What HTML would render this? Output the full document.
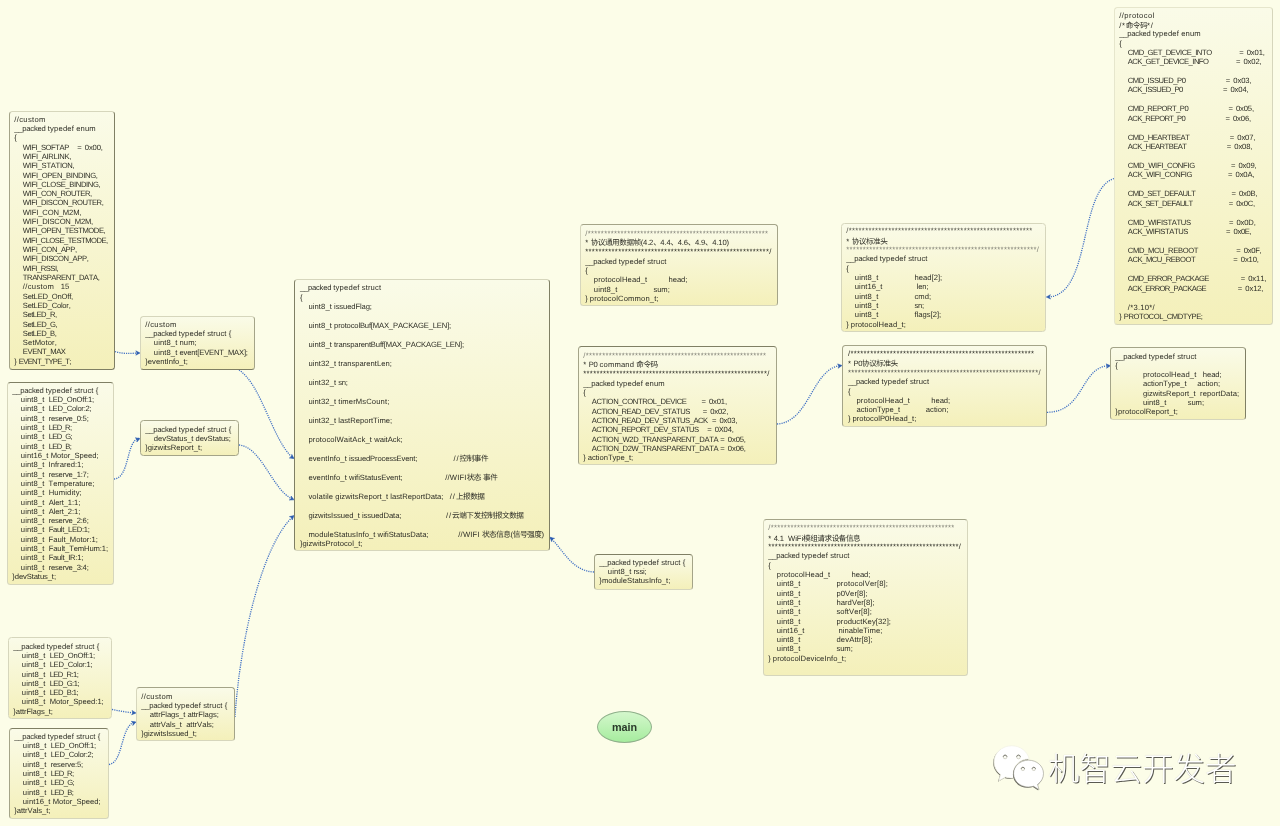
<!DOCTYPE html>
<html lang="zh">
<head>
<meta charset="utf-8">
<title>main</title>
<style>
html,body{margin:0;padding:0;}
body{width:1280px;height:826px;background:#fcfde8;position:relative;overflow:hidden;
 font-family:"Liberation Sans","Noto Sans CJK SC",sans-serif;}
.n{position:absolute;box-sizing:border-box;border:1px solid #a4a488;
 border-radius:3.5px;background:linear-gradient(180deg,#fafbe8 0%,#f4f0ba 100%);
 font-family:"Liberation Sans","Noto Sans CJK SC",sans-serif;font-size:7.65px;line-height:9.32px;color:#2e2e26;white-space:pre;overflow:hidden;margin:0;
 font-kerning:none;text-rendering:geometricPrecision;will-change:transform;}
.n i{font-style:normal;}
.n .e{display:inline-block;height:9.68px;vertical-align:top;}
.n .z{font-weight:400;}
.n .k{position:relative;top:1px;}
.n .tl{color:#85857a;}
.n .tm{color:#55554c;}
svg{position:absolute;left:0;top:0;}
.c{fill:none;stroke:#3d6ec4;stroke-width:1.3;stroke-dasharray:1.15 1.1;}
.a{fill:#2c5cb0;stroke:#2c5cb0;stroke-width:0.5;stroke-linejoin:round;}
#main{position:absolute;left:597px;top:711px;width:55px;height:32px;border-radius:50%;box-sizing:border-box;
 border:1px solid #8fb08a;background:linear-gradient(180deg,#d4f7cc 0%,#a6ec9e 100%);
 font-weight:bold;font-size:10.8px;line-height:30px;text-align:center;color:#2a3a2a;will-change:transform;}
#wm{position:absolute;left:1048px;top:747.5px;font-size:31.4px;line-height:38px;color:#fff;letter-spacing:0;
 text-shadow:1px 1px 0.6px #5a5a52, 0 0 1px #c8c8b8;white-space:nowrap;font-family:"Noto Sans CJK SC","Liberation Sans",sans-serif;font-weight:300;will-change:transform;}
</style>
</head>
<body>
<svg width="1280" height="826" viewBox="0 0 1280 826">
<path class="c" d="M115,351.5 C122,354 130,353.5 139,353"/>
<path class="a" transform="translate(140,353) rotate(0)" d="M0,0 L-4.2,-2.2 L-3,0 L-4.2,2.2 Z"/>
<path class="c" d="M239,370 C262,385 272,440 293,458"/>
<path class="a" transform="translate(294,458.6) rotate(35)" d="M0,0 L-4.2,-2.2 L-3,0 L-4.2,2.2 Z"/>
<path class="c" d="M114,479 C130,478 126,440 139,438.5"/>
<path class="a" transform="translate(140,438.5) rotate(-20)" d="M0,0 L-4.2,-2.2 L-3,0 L-4.2,2.2 Z"/>
<path class="c" d="M239,445 C262,447 272,490 293,499.5"/>
<path class="a" transform="translate(294,499.8) rotate(25)" d="M0,0 L-4.2,-2.2 L-3,0 L-4.2,2.2 Z"/>
<path class="c" d="M235,717 C240,640 262,545 293,516.5"/>
<path class="a" transform="translate(294,515.6) rotate(-40)" d="M0,0 L-4.2,-2.2 L-3,0 L-4.2,2.2 Z"/>
<path class="c" d="M112,709.5 C120,711 128,712.5 135,713"/>
<path class="a" transform="translate(136,713) rotate(5)" d="M0,0 L-4.2,-2.2 L-3,0 L-4.2,2.2 Z"/>
<path class="c" d="M109,764.5 C124,762 120,726 135,722"/>
<path class="a" transform="translate(136,722) rotate(-20)" d="M0,0 L-4.2,-2.2 L-3,0 L-4.2,2.2 Z"/>
<path class="c" d="M594,572 C572,571 564,551 550.5,537.8"/>
<path class="a" transform="translate(550,537.2) rotate(222)" d="M0,0 L-4.2,-2.2 L-3,0 L-4.2,2.2 Z"/>
<path class="c" d="M777,424 C810,422 812,368 841,365.5"/>
<path class="a" transform="translate(842,365.5) rotate(-8)" d="M0,0 L-4.2,-2.2 L-3,0 L-4.2,2.2 Z"/>
<path class="c" d="M1047,412.3 C1085,412 1080,367 1109,365.7"/>
<path class="a" transform="translate(1110.5,365.7) rotate(-5)" d="M0,0 L-4.2,-2.2 L-3,0 L-4.2,2.2 Z"/>
<path class="c" d="M1114,178.5 C1078,190 1092,296 1047.5,297"/>
<path class="a" transform="translate(1046.3,297) rotate(178)" d="M0,0 L-4.2,-2.2 L-3,0 L-4.2,2.2 Z"/>
</svg>
<pre class="n" id="bA" style="left:9px;top:111px;width:106px;height:259px;padding:2.65px 0 0 4.3px;border-color:#d6d6bc #7f7f64 #7f7f64 #a4a488;"><i style="letter-spacing:0.33px">//custom</i>
<i style="letter-spacing:-0.23px">__packed</i> <i style="letter-spacing:0.18px">typedef</i> <i style="letter-spacing:0.15px">enum</i>
<i style="letter-spacing:-0.19px">{</i>
    <i style="letter-spacing:-0.45px">WIFI_SOFTAP</i>    <i style="letter-spacing:0.90px">=</i> <i style="letter-spacing:-0.14px">0x00,</i>
    <i style="letter-spacing:-0.30px">WIFI_AIRLINK,</i>
    <i style="letter-spacing:-0.31px">WIFI_STATION,</i>
    <i style="letter-spacing:-0.30px">WIFI_OPEN_BINDING,</i>
    <i style="letter-spacing:-0.37px">WIFI_CLOSE_BINDING,</i>
    <i style="letter-spacing:-0.44px">WIFI_CON_ROUTER,</i>
    <i style="letter-spacing:-0.43px">WIFI_DISCON_ROUTER,</i>
    <i style="letter-spacing:-0.17px">WIFI_CON_M2M,</i>
    <i style="letter-spacing:-0.20px">WIFI_DISCON_M2M,</i>
    <i style="letter-spacing:-0.44px">WIFI_OPEN_TESTMODE,</i>
    <i style="letter-spacing:-0.51px">WIFI_CLOSE_TESTMODE,</i>
    <i style="letter-spacing:-0.39px">WIFI_CON_APP,</i>
    <i style="letter-spacing:-0.38px">WIFI_DISCON_APP,</i>
    <i style="letter-spacing:-0.50px">WIFI_RSSI,</i>
    <i style="letter-spacing:-0.41px">TRANSPARENT_DATA,</i>
    <i style="letter-spacing:0.33px">//custom</i>   <i style="letter-spacing:-0.02px">15</i>
    <i style="letter-spacing:-0.22px">SetLED_OnOff,</i>
    <i style="letter-spacing:-0.25px">SetLED_Color,</i>
    <i style="letter-spacing:-0.50px">SetLED_R,</i>
    <i style="letter-spacing:-0.47px">SetLED_G,</i>
    <i style="letter-spacing:-0.48px">SetLED_B,</i>
    <i style="letter-spacing:0.12px">SetMotor,</i>
    <i style="letter-spacing:-0.39px">EVENT_MAX</i>
<i style="letter-spacing:-0.19px">}</i> <i style="letter-spacing:-0.68px">EVENT_TYPE_T;</i></pre>
<pre class="n" id="bB" style="left:140px;top:316px;width:115px;height:54px;padding:2.80px 0 0 4.3px;border-color:#d6d6bc #a4a488 #7f7f64 #d6d6bc;"><i style="letter-spacing:0.33px">//custom</i>
<i style="letter-spacing:-0.23px">__packed</i> <i style="letter-spacing:0.18px">typedef</i> <i style="letter-spacing:0.12px">struct</i> <i style="letter-spacing:-0.19px">{</i>
    <i style="letter-spacing:0.09px">uint8_t</i> <i style="letter-spacing:0.08px">num;</i>
    <i style="letter-spacing:0.09px">uint8_t</i> <i style="letter-spacing:-0.18px">event[EVENT_MAX];</i>
}eventInfo_t;</pre>
<pre class="n" id="bC" style="left:7px;top:382px;width:107px;height:203px;padding:2.80px 0 0 4.3px;border-color:#7f7f64 #d6d6bc #d6d6bc #d6d6bc;"><i style="letter-spacing:-0.23px">__packed</i> <i style="letter-spacing:0.18px">typedef</i> <i style="letter-spacing:0.12px">struct</i> <i style="letter-spacing:-0.19px">{</i>
    <i style="letter-spacing:0.09px">uint8_t</i>  <i style="letter-spacing:-0.23px">LED_OnOff:1;</i>
    <i style="letter-spacing:0.09px">uint8_t</i>  <i style="letter-spacing:-0.26px">LED_Color:2;</i>
    <i style="letter-spacing:0.09px">uint8_t</i>  <i style="letter-spacing:-0.21px">reserve_0:5;</i>
    <i style="letter-spacing:0.09px">uint8_t</i>  <i style="letter-spacing:-0.66px">LED_R;</i>
    <i style="letter-spacing:0.09px">uint8_t</i>  <i style="letter-spacing:-0.62px">LED_G;</i>
    <i style="letter-spacing:0.09px">uint8_t</i>  <i style="letter-spacing:-0.62px">LED_B;</i>
    <i style="letter-spacing:0.07px">uint16_t</i> Motor_Speed;
    <i style="letter-spacing:0.09px">uint8_t</i>  Infrared:1;
    <i style="letter-spacing:0.09px">uint8_t</i>  <i style="letter-spacing:-0.21px">reserve_1:7;</i>
    <i style="letter-spacing:0.09px">uint8_t</i>  Temperature;
    <i style="letter-spacing:0.09px">uint8_t</i>  <i style="letter-spacing:0.16px">Humidity;</i>
    <i style="letter-spacing:0.09px">uint8_t</i>  <i style="letter-spacing:-0.12px">Alert_1:1;</i>
    <i style="letter-spacing:0.09px">uint8_t</i>  <i style="letter-spacing:-0.12px">Alert_2:1;</i>
    <i style="letter-spacing:0.09px">uint8_t</i>  <i style="letter-spacing:-0.21px">reserve_2:6;</i>
    <i style="letter-spacing:0.09px">uint8_t</i>  <i style="letter-spacing:-0.31px">Fault_LED:1;</i>
    <i style="letter-spacing:0.09px">uint8_t</i>  Fault_Motor:1;
    <i style="letter-spacing:0.09px">uint8_t</i>  <i style="letter-spacing:-0.12px">Fault_TemHum:1;</i>
    <i style="letter-spacing:0.09px">uint8_t</i>  <i style="letter-spacing:-0.27px">Fault_IR:1;</i>
    <i style="letter-spacing:0.09px">uint8_t</i>  <i style="letter-spacing:-0.21px">reserve_3:4;</i>
<i style="letter-spacing:-0.11px">}devStatus_t;</i></pre>
<pre class="n" id="bD" style="left:140px;top:420px;width:99px;height:36px;padding:3.50px 0 0 4.3px;border-color:#a4a488 #a4a488 #a4a488 #a4a488;"><i style="letter-spacing:-0.23px">__packed</i> <i style="letter-spacing:0.18px">typedef</i> <i style="letter-spacing:0.12px">struct</i> <i style="letter-spacing:-0.19px">{</i>
    <i style="letter-spacing:-0.07px">devStatus_t</i> <i style="letter-spacing:-0.07px">devStatus;</i>
}gizwitsReport_t;</pre>
<pre class="n" id="bE" style="left:8px;top:637px;width:104px;height:82px;padding:3.60px 0 0 4.3px;border-color:#d6d6bc #d6d6bc #d6d6bc #d6d6bc;"><i style="letter-spacing:-0.23px">__packed</i> <i style="letter-spacing:0.18px">typedef</i> <i style="letter-spacing:0.12px">struct</i> <i style="letter-spacing:-0.19px">{</i>
    <i style="letter-spacing:0.09px">uint8_t</i>  <i style="letter-spacing:-0.23px">LED_OnOff:1;</i>
    <i style="letter-spacing:0.09px">uint8_t</i>  <i style="letter-spacing:-0.26px">LED_Color:1;</i>
    <i style="letter-spacing:0.09px">uint8_t</i>  <i style="letter-spacing:-0.55px">LED_R:1;</i>
    <i style="letter-spacing:0.09px">uint8_t</i>  <i style="letter-spacing:-0.52px">LED_G:1;</i>
    <i style="letter-spacing:0.09px">uint8_t</i>  <i style="letter-spacing:-0.52px">LED_B:1;</i>
    <i style="letter-spacing:0.09px">uint8_t</i>  <i style="letter-spacing:-0.02px">Motor_Speed:1;</i>
<i style="letter-spacing:-0.09px">}attrFlags_t;</i></pre>
<pre class="n" id="bF" style="left:9px;top:728px;width:100px;height:91px;padding:2.75px 0 0 4.3px;border-color:#7f7f64 #d6d6bc #d6d6bc #a4a488;"><i style="letter-spacing:-0.23px">__packed</i> <i style="letter-spacing:0.18px">typedef</i> <i style="letter-spacing:0.12px">struct</i> <i style="letter-spacing:-0.19px">{</i>
    <i style="letter-spacing:0.09px">uint8_t</i>  <i style="letter-spacing:-0.23px">LED_OnOff:1;</i>
    <i style="letter-spacing:0.09px">uint8_t</i>  <i style="letter-spacing:-0.26px">LED_Color:2;</i>
    <i style="letter-spacing:0.09px">uint8_t</i>  <i style="letter-spacing:-0.15px">reserve:5;</i>
    <i style="letter-spacing:0.09px">uint8_t</i>  <i style="letter-spacing:-0.66px">LED_R;</i>
    <i style="letter-spacing:0.09px">uint8_t</i>  <i style="letter-spacing:-0.62px">LED_G;</i>
    <i style="letter-spacing:0.09px">uint8_t</i>  <i style="letter-spacing:-0.62px">LED_B;</i>
    <i style="letter-spacing:0.07px">uint16_t</i> Motor_Speed;
<i style="letter-spacing:-0.07px">}attrVals_t;</i></pre>
<pre class="n" id="bG" style="left:136px;top:687px;width:99px;height:54px;padding:3.60px 0 0 4.3px;border-color:#a4a488 #a4a488 #d6d6bc #d6d6bc;"><i style="letter-spacing:0.33px">//custom</i>
<i style="letter-spacing:-0.23px">__packed</i> <i style="letter-spacing:0.18px">typedef</i> <i style="letter-spacing:0.12px">struct</i> <i style="letter-spacing:-0.19px">{</i>
    <i style="letter-spacing:-0.05px">attrFlags_t</i> <i style="letter-spacing:-0.05px">attrFlags;</i>
    <i style="letter-spacing:-0.02px">attrVals_t</i>  <i style="letter-spacing:-0.02px">attrVals;</i>
<i style="letter-spacing:-0.06px">}gizwitsIssued_t;</i></pre>
<pre class="n" id="bH" style="left:294px;top:279px;width:256px;height:272px;padding:3.20px 0 0 4.9px;border-color:#d6d6bc #7f7f64 #d6d6bc #7f7f64;"><i style="letter-spacing:-0.23px">__packed</i> <i style="letter-spacing:0.18px">typedef</i> <i style="letter-spacing:0.12px">struct</i>
<i style="letter-spacing:-0.19px">{</i>
    <i style="letter-spacing:0.09px">uint8_t</i> <i style="letter-spacing:-0.12px">issuedFlag;</i>
<i class="e"></i>
    <i style="letter-spacing:0.09px">uint8_t</i> <i style="letter-spacing:-0.17px">protocolBuf[MAX_PACKAGE_LEN];</i>
<i class="e"></i>
    <i style="letter-spacing:0.09px">uint8_t</i> <i style="letter-spacing:-0.17px">transparentBuff[MAX_PACKAGE_LEN];</i>
<i class="e"></i>
    <i style="letter-spacing:0.07px">uint32_t</i> transparentLen;
<i class="e"></i>
    <i style="letter-spacing:0.07px">uint32_t</i> <i style="letter-spacing:-0.25px">sn;</i>
<i class="e"></i>
    <i style="letter-spacing:0.07px">uint32_t</i> <i style="letter-spacing:0.11px">timerMsCount;</i>
<i class="e"></i>
    <i style="letter-spacing:0.07px">uint32_t</i> lastReportTime;
<i class="e"></i>
    <i style="letter-spacing:0.12px">protocolWaitAck_t</i> waitAck;
<i class="e"></i>
    <i style="letter-spacing:0.06px">eventInfo_t</i> <i style="letter-spacing:-0.16px">issuedProcessEvent;</i>                 <i style="letter-spacing:0.94px">//</i><i class="z" style="letter-spacing:-0.50px">控制事件</i>
<i class="e"></i>
    <i style="letter-spacing:0.06px">eventInfo_t</i> <i style="letter-spacing:-0.04px">wifiStatusEvent;</i>                    <i style="letter-spacing:0.18px">//WIFI</i><i class="z" style="letter-spacing:-0.50px">状态</i> <i class="z" style="letter-spacing:-0.50px">事件</i>
<i class="e"></i>
    <i style="letter-spacing:0.13px">volatile</i> <i style="letter-spacing:0.04px">gizwitsReport_t</i> lastReportData;   <i style="letter-spacing:0.94px">//</i><i class="z" style="letter-spacing:-0.50px">上报数据</i>
<i class="e"></i>
    <i style="letter-spacing:-0.03px">gizwitsIssued_t</i> <i style="letter-spacing:-0.08px">issuedData;</i>                     <i style="letter-spacing:0.94px">//</i><i class="z" style="letter-spacing:-0.50px">云端下发控制报文数据</i>
<i class="e"></i>
    <i style="letter-spacing:0.07px">moduleStatusInfo_t</i> wifiStatusData;              <i style="letter-spacing:0.18px">//WIFI</i> <i class="z" style="letter-spacing:-0.50px">状态信息</i><i style="letter-spacing:-0.18px">(</i><i class="z" style="letter-spacing:-0.50px">信号强度</i><i style="letter-spacing:-0.18px">)</i>
<i style="letter-spacing:0.03px">}gizwitsProtocol_t;</i></pre>
<pre class="n" id="bI" style="left:580px;top:224px;width:198px;height:82px;padding:3.80px 0 0 4.3px;border-color:#a4a488 #a4a488 #d6d6bc #d6d6bc;"><i class="tl"><i style="letter-spacing:0.31px">/*******************************************************</i></i>
<i style="letter-spacing:0.30px">*</i> <i class="z" style="letter-spacing:-0.50px">协议通用数据帧</i><i style="letter-spacing:-0.16px">(4.2</i><i class="z" style="letter-spacing:-0.50px">、</i><i style="letter-spacing:-0.16px">4.4</i><i class="z" style="letter-spacing:-0.50px">、</i><i style="letter-spacing:-0.16px">4.6</i><i class="z" style="letter-spacing:-0.50px">、</i><i style="letter-spacing:-0.16px">4.9</i><i class="z" style="letter-spacing:-0.50px">、</i><i style="letter-spacing:-0.13px">4.10)</i>
<i style="letter-spacing:0.31px">********************************************************/</i>
<i style="letter-spacing:-0.23px">__packed</i> <i style="letter-spacing:0.18px">typedef</i> <i style="letter-spacing:0.12px">struct</i>
<i style="letter-spacing:-0.19px">{</i>
    <i style="letter-spacing:0.12px">protocolHead_t</i>          <i style="letter-spacing:-0.06px">head;</i>
    <i style="letter-spacing:0.09px">uint8_t</i>                 <i style="letter-spacing:-0.09px">sum;</i>
<i style="letter-spacing:-0.19px">}</i> <i style="letter-spacing:0.13px">protocolCommon_t;</i></pre>
<pre class="n" id="bJ" style="left:578px;top:346px;width:199px;height:119px;padding:3.70px 0 0 4.3px;border-color:#7f7f64 #a4a488 #d6d6bc #a4a488;"><i class="tl"><i style="letter-spacing:0.31px">/*******************************************************</i></i>
<i style="letter-spacing:0.30px">*</i> <i style="letter-spacing:-0.36px">P0</i> <i style="letter-spacing:0.17px">command</i> <i class="z" style="letter-spacing:-0.50px">命令码</i>
<i style="letter-spacing:0.31px">********************************************************/</i>
<i style="letter-spacing:-0.23px">__packed</i> <i style="letter-spacing:0.18px">typedef</i> <i style="letter-spacing:0.15px">enum</i>
<i style="letter-spacing:-0.19px">{</i>
    <i style="letter-spacing:-0.40px">ACTION_CONTROL_DEVICE</i>       <i style="letter-spacing:0.90px">=</i> <i style="letter-spacing:-0.14px">0x01,</i>
    <i style="letter-spacing:-0.48px">ACTION_READ_DEV_STATUS</i>      <i style="letter-spacing:0.90px">=</i> <i style="letter-spacing:-0.14px">0x02,</i>
    <i style="letter-spacing:-0.49px">ACTION_READ_DEV_STATUS_ACK</i>  <i style="letter-spacing:0.90px">=</i> <i style="letter-spacing:-0.14px">0x03,</i>
    <i style="letter-spacing:-0.52px">ACTION_REPORT_DEV_STATUS</i>    <i style="letter-spacing:0.90px">=</i> <i style="letter-spacing:-0.19px">0X04,</i>
    <i style="letter-spacing:-0.35px">ACTION_W2D_TRANSPARENT_DATA</i> <i style="letter-spacing:0.90px">=</i> <i style="letter-spacing:-0.14px">0x05,</i>
    <i style="letter-spacing:-0.35px">ACTION_D2W_TRANSPARENT_DATA</i> <i style="letter-spacing:0.90px">=</i> <i style="letter-spacing:-0.14px">0x06,</i>
<i style="letter-spacing:-0.19px">}</i> <i style="letter-spacing:-0.04px">actionType_t;</i></pre>
<pre class="n" id="bK" style="left:594px;top:554px;width:99px;height:36px;padding:2.80px 0 0 4.3px;border-color:#7f7f64 #a4a488 #d6d6bc #a4a488;"><i style="letter-spacing:-0.23px">__packed</i> <i style="letter-spacing:0.18px">typedef</i> <i style="letter-spacing:0.12px">struct</i> <i style="letter-spacing:-0.19px">{</i>
    <i style="letter-spacing:0.09px">uint8_t</i> <i style="letter-spacing:-0.21px">rssi;</i>
<i style="letter-spacing:0.03px">}moduleStatusInfo_t;</i></pre>
<pre class="n" id="bL" style="left:763px;top:519px;width:205px;height:157px;padding:3.40px 0 0 4.3px;border-color:#a4a488 #d6d6bc #d6d6bc #d6d6bc;"><i class="tl"><i style="letter-spacing:0.31px">/********************************************************</i></i>
<i class="k"><i style="letter-spacing:0.30px">*</i> <i style="letter-spacing:-0.16px">4.1</i>  <i style="letter-spacing:-0.08px">WiFi</i><i class="z" style="letter-spacing:-0.50px">模组请求设备信息</i></i>
<i style="letter-spacing:0.31px">**********************************************************/</i>
<i style="letter-spacing:-0.23px">__packed</i> <i style="letter-spacing:0.18px">typedef</i> <i style="letter-spacing:0.12px">struct</i>
<i style="letter-spacing:-0.19px">{</i>
    <i style="letter-spacing:0.12px">protocolHead_t</i>          <i style="letter-spacing:-0.06px">head;</i>
    <i style="letter-spacing:0.09px">uint8_t</i>                 <i style="letter-spacing:0.13px">protocolVer[8];</i>
    <i style="letter-spacing:0.09px">uint8_t</i>                 <i style="letter-spacing:0.02px">p0Ver[8];</i>
    <i style="letter-spacing:0.09px">uint8_t</i>                 <i style="letter-spacing:0.03px">hardVer[8];</i>
    <i style="letter-spacing:0.09px">uint8_t</i>                 <i style="letter-spacing:0.05px">softVer[8];</i>
    <i style="letter-spacing:0.09px">uint8_t</i>                 <i style="letter-spacing:0.07px">productKey[32];</i>
    <i style="letter-spacing:0.07px">uint16_t</i>                ninableTime;
    <i style="letter-spacing:0.09px">uint8_t</i>                 <i style="letter-spacing:0.13px">devAttr[8];</i>
    <i style="letter-spacing:0.09px">uint8_t</i>                 <i style="letter-spacing:-0.09px">sum;</i>
<i style="letter-spacing:-0.19px">}</i> <i style="letter-spacing:0.08px">protocolDeviceInfo_t;</i>
<i class="e"></i></pre>
<pre class="n" id="bM" style="left:841px;top:223px;width:205px;height:109px;padding:2.40px 0 0 4.3px;border-color:#d6d6bc #d6d6bc #d6d6bc #d6d6bc;"><i class="tm"><i style="letter-spacing:0.31px">/********************************************************</i></i>
<i class="k"><i style="letter-spacing:0.30px">*</i> <i class="z" style="letter-spacing:-0.50px">协议标准头</i></i>
<i class="tl"><i style="letter-spacing:0.31px">**********************************************************/</i></i>
<i style="letter-spacing:-0.23px">__packed</i> <i style="letter-spacing:0.18px">typedef</i> <i style="letter-spacing:0.12px">struct</i>
<i style="letter-spacing:-0.19px">{</i>
    <i style="letter-spacing:0.09px">uint8_t</i>                 <i style="letter-spacing:0.02px">head[2];</i>
    <i style="letter-spacing:0.07px">uint16_t</i>                <i style="letter-spacing:-0.05px">len;</i>
    <i style="letter-spacing:0.09px">uint8_t</i>                 <i style="letter-spacing:0.03px">cmd;</i>
    <i style="letter-spacing:0.09px">uint8_t</i>                 <i style="letter-spacing:-0.25px">sn;</i>
    <i style="letter-spacing:0.09px">uint8_t</i>                 flags[2];
<i style="letter-spacing:-0.19px">}</i> <i style="letter-spacing:0.08px">protocolHead_t;</i></pre>
<pre class="n" id="bN" style="left:842px;top:345px;width:205px;height:82px;padding:3.30px 0 0 5.0px;border-color:#a4a488 #a4a488 #d6d6bc #a4a488;"><i style="letter-spacing:0.31px">/********************************************************</i>
<i style="letter-spacing:0.30px">*</i> <i style="letter-spacing:-0.36px">P0</i><i class="z" style="letter-spacing:-0.50px">协议标准头</i>
<i class="tm"><i style="letter-spacing:0.31px">**********************************************************/</i></i>
<i style="letter-spacing:-0.23px">__packed</i> <i style="letter-spacing:0.18px">typedef</i> <i style="letter-spacing:0.12px">struct</i>
<i style="letter-spacing:-0.19px">{</i>
    <i style="letter-spacing:0.12px">protocolHead_t</i>          <i style="letter-spacing:-0.06px">head;</i>
    actionType_t            <i style="letter-spacing:0.05px">action;</i>
<i style="letter-spacing:-0.19px">}</i> <i style="letter-spacing:0.03px">protocolP0Head_t;</i></pre>
<pre class="n" id="bO" style="left:1110px;top:347px;width:136px;height:73px;padding:3.50px 0 0 4.3px;border-color:#a4a488 #7f7f64 #d6d6bc #a4a488;"><i style="letter-spacing:-0.23px">__packed</i> <i style="letter-spacing:0.18px">typedef</i> <i style="letter-spacing:0.12px">struct</i>
<i style="letter-spacing:-0.19px">{</i>
             <i style="letter-spacing:0.12px">protocolHead_t</i>   <i style="letter-spacing:-0.06px">head;</i>
             actionType_t     <i style="letter-spacing:0.05px">action;</i>
             <i style="letter-spacing:0.04px">gizwitsReport_t</i>  <i style="letter-spacing:0.09px">reportData;</i>
             <i style="letter-spacing:0.09px">uint8_t</i>          <i style="letter-spacing:-0.09px">sum;</i>
<i style="letter-spacing:0.08px">}protocolReport_t;</i></pre>
<pre class="n" id="bP" style="left:1114px;top:7px;width:159px;height:318px;padding:2.60px 0 0 4.3px;border-color:#e6e6cc #d6d6bc #d6d6bc #e6e6cc;"><i style="letter-spacing:0.40px">//protocol</i>
<i class="k"><i style="letter-spacing:0.62px">/*</i><i class="z" style="letter-spacing:-0.50px">命令码</i><i style="letter-spacing:0.62px">*/</i></i>
<i style="letter-spacing:-0.23px">__packed</i> <i style="letter-spacing:0.18px">typedef</i> <i style="letter-spacing:0.15px">enum</i>
<i style="letter-spacing:-0.19px">{</i>
    <i style="letter-spacing:-0.46px">CMD_GET_DEVICE_INTO</i>             <i style="letter-spacing:0.90px">=</i> <i style="letter-spacing:-0.14px">0x01,</i>
    <i style="letter-spacing:-0.54px">ACK_GET_DEVICE_INFO</i>             <i style="letter-spacing:0.90px">=</i> <i style="letter-spacing:-0.14px">0x02,</i>
<i class="e"></i>
    <i style="letter-spacing:-0.46px">CMD_ISSUED_P0</i>                   <i style="letter-spacing:0.90px">=</i> <i style="letter-spacing:-0.14px">0x03,</i>
    <i style="letter-spacing:-0.55px">ACK_ISSUED_P0</i>                   <i style="letter-spacing:0.90px">=</i> <i style="letter-spacing:-0.14px">0x04,</i>
<i class="e"></i>
    <i style="letter-spacing:-0.52px">CMD_REPORT_P0</i>                   <i style="letter-spacing:0.90px">=</i> <i style="letter-spacing:-0.14px">0x05,</i>
    <i style="letter-spacing:-0.62px">ACK_REPORT_P0</i>                   <i style="letter-spacing:0.90px">=</i> <i style="letter-spacing:-0.14px">0x06,</i>
<i class="e"></i>
    <i style="letter-spacing:-0.45px">CMD_HEARTBEAT</i>                   <i style="letter-spacing:0.90px">=</i> <i style="letter-spacing:-0.14px">0x07,</i>
    <i style="letter-spacing:-0.55px">ACK_HEARTBEAT</i>                   <i style="letter-spacing:0.90px">=</i> <i style="letter-spacing:-0.14px">0x08,</i>
<i class="e"></i>
    <i style="letter-spacing:-0.31px">CMD_WIFI_CONFIG</i>                 <i style="letter-spacing:0.90px">=</i> <i style="letter-spacing:-0.14px">0x09,</i>
    <i style="letter-spacing:-0.39px">ACK_WIFI_CONFIG</i>                 <i style="letter-spacing:0.90px">=</i> <i style="letter-spacing:-0.15px">0x0A,</i>
<i class="e"></i>
    <i style="letter-spacing:-0.53px">CMD_SET_DEFAULT</i>                 <i style="letter-spacing:0.90px">=</i> <i style="letter-spacing:-0.26px">0x0B,</i>
    <i style="letter-spacing:-0.61px">ACK_SET_DEFAULT</i>                 <i style="letter-spacing:0.90px">=</i> <i style="letter-spacing:-0.27px">0x0C,</i>
<i class="e"></i>
    <i style="letter-spacing:-0.36px">CMD_WIFISTATUS</i>                  <i style="letter-spacing:0.90px">=</i> <i style="letter-spacing:-0.14px">0x0D,</i>
    <i style="letter-spacing:-0.44px">ACK_WIFISTATUS</i>                  <i style="letter-spacing:0.90px">=</i> <i style="letter-spacing:-0.36px">0x0E,</i>
<i class="e"></i>
    <i style="letter-spacing:-0.38px">CMD_MCU_REBOOT</i>                  <i style="letter-spacing:0.90px">=</i> <i style="letter-spacing:-0.31px">0x0F,</i>
    <i style="letter-spacing:-0.47px">ACK_MCU_REBOOT</i>                  <i style="letter-spacing:0.90px">=</i> <i style="letter-spacing:-0.14px">0x10,</i>
<i class="e"></i>
    <i style="letter-spacing:-0.55px">CMD_ERROR_PACKAGE</i>               <i style="letter-spacing:0.90px">=</i> <i style="letter-spacing:-0.14px">0x11,</i>
    <i style="letter-spacing:-0.62px">ACK_ERROR_PACKAGE</i>               <i style="letter-spacing:0.90px">=</i> <i style="letter-spacing:-0.14px">0x12,</i>
<i class="e"></i>
    <i style="letter-spacing:0.25px">/*3.10*/</i>
<i style="letter-spacing:-0.19px">}</i> <i style="letter-spacing:-0.47px">PROTOCOL_CMDTYPE;</i></pre>
<div id="main">main</div>
<svg id="wx" width="60" height="54" viewBox="0 0 60 54" style="left:990px;top:743.5px;">
<g transform="translate(1.2,-1.4) scale(0.96,1.06)">
<path d="M21.5,3 C11,3 3,9.8 3,18.2 C3,23 5.6,27.2 9.8,30 L8,36 L14.8,32.4 C16.8,33 19.2,33.4 21.5,33.4 C22.3,33.4 23,33.4 23.8,33.3 C23.2,31.8 23,30.4 23,29 C23,21.4 30.2,15.4 39,15.4 L39.6,15.4 C37.8,8.4 30.4,3 21.5,3 Z" fill="#77776c" transform="translate(-0.9,0.9)"/>
<path d="M21.5,3 C11,3 3,9.8 3,18.2 C3,23 5.6,27.2 9.8,30 L8,36 L14.8,32.4 C16.8,33 19.2,33.4 21.5,33.4 C22.3,33.4 23,33.4 23.8,33.3 C23.2,31.8 23,30.4 23,29 C23,21.4 30.2,15.4 39,15.4 L39.6,15.4 C37.8,8.4 30.4,3 21.5,3 Z" fill="#fff" stroke="#f2f2e6" stroke-width="0.8"/>
</g>
<g transform="translate(-1,-0.9) scale(1,1.03)">
<path d="M39.5,16.6 C31.2,16.6 24.6,22.3 24.6,29.6 C24.6,36.9 31.2,42.6 39.5,42.6 C41.3,42.6 43,42.3 44.6,41.9 L50,45.2 L48.6,40.2 C52.2,37.8 54.5,33.9 54.5,29.6 C54.5,22.3 47.9,16.6 39.5,16.6 Z" fill="#6c6c62" transform="translate(-0.7,0.8)"/>
<path d="M39.5,16.6 C31.2,16.6 24.6,22.3 24.6,29.6 C24.6,36.9 31.2,42.6 39.5,42.6 C41.3,42.6 43,42.3 44.6,41.9 L50,45.2 L48.6,40.2 C52.2,37.8 54.5,33.9 54.5,29.6 C54.5,22.3 47.9,16.6 39.5,16.6 Z" fill="#fff" stroke="#8e8e84" stroke-width="0.55"/>
</g>
<g fill="#fafaf2" stroke="#c4c4b8" stroke-width="0.7">
<circle cx="15.1" cy="12.9" r="1.9"/><circle cx="28.5" cy="12.9" r="1.9"/>
<circle cx="32.9" cy="24.9" r="1.7"/><circle cx="43.8" cy="24.9" r="1.7"/>
</g>
<g fill="none" stroke="#66665c" stroke-width="0.8" stroke-linecap="round">
<path d="M13.3,12.4 A1.9,1.9 0 0 1 16.9,12.4"/><path d="M26.7,12.4 A1.9,1.9 0 0 1 30.3,12.4"/>
<path d="M31.3,24.4 A1.7,1.7 0 0 1 34.5,24.4"/><path d="M42.2,24.4 A1.7,1.7 0 0 1 45.4,24.4"/>
</g>
</svg>
<div id="wm">机智云开发者</div>
</body>
</html>
